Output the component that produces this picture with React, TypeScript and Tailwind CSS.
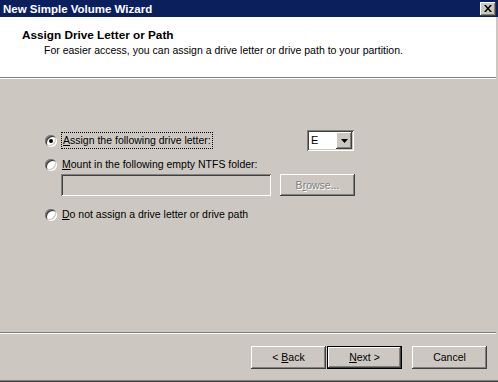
import type {ReactNode} from 'react';

const raised =
    'shadow-[inset_-1px_-1px_0_#404040,inset_1px_1px_0_#ffffff,inset_-2px_-2px_0_#808080,inset_2px_2px_0_#ccc8c1]';
const sunken =
    'shadow-[inset_1px_1px_0_#808080,inset_-1px_-1px_0_#ffffff,inset_2px_2px_0_#404040,inset_-2px_-2px_0_#ccc8c1]';

const Radio = ({checked}: {checked?: boolean}) => (
    <span className={`relative flex h-[12px] w-[12px] shrink-0 items-center justify-center rounded-full bg-white ${sunken}`}>
        {checked && <span className="h-[4px] w-[4px] rounded-full bg-black" />}
    </span>
);

const Button = ({children, isDefault}: {children: ReactNode; isDefault?: boolean}) => (
    <div
        className={`flex h-[23px] w-[75px] items-center justify-center bg-[#ccc8c1] ${
            isDefault ? 'border border-black' : ''
        }`}
    >
        <div className={`flex h-full w-full items-center justify-center ${raised}`}>
            <span className="whitespace-pre">{children}</span>
        </div>
    </div>
);

const Mn = ({children}: {children: ReactNode}) => <span className="underline underline-offset-[1px]">{children}</span>;

export default function App() {
    return (
        <div className="flex h-[382px] w-[498px] flex-col bg-[#ccc8c1] font-['Liberation_Sans',Arial,sans-serif] text-[10.5px] leading-[13px] text-black">
            {/* title bar */}
            <div className="flex h-[17px] shrink-0 items-center justify-between bg-[#0b1f5c] pl-[3px] pr-[2px]">
                <span className="text-[11.5px] font-bold leading-[14px] text-white">New Simple Volume Wizard</span>
                <div className={`flex h-[14px] w-[16px] items-center justify-center bg-[#ccc8c1] ${raised}`}>
                    <svg width="8" height="7" viewBox="0 0 8 7" className="mb-[1px]">
                        <path d="M0 0h2l2 2.5L6 0h2L5 3.5 8 7H6L4 4.5 2 7H0l3-3.5z" fill="#000" />
                    </svg>
                </div>
            </div>

            <div className="flex min-h-0 flex-1">
                <div className="flex flex-1 flex-col">
                    {/* header */}
                    <div className="h-[60px] shrink-0 bg-white pt-[11px]">
                        <div className="pl-[22px] text-[11.75px] font-bold leading-[14px]">Assign Drive Letter or Path</div>
                        <div className="mt-[2px] pl-[44px]">
                            For easier access, you can assign a drive letter or drive path to your partition.
                        </div>
                    </div>
                    <div className="h-px shrink-0 bg-[#808080]" />
                    <div className="h-px shrink-0 bg-white" />

                    {/* body */}
                    <div className="flex flex-1 flex-col pl-[45px] pt-[51px]">
                        <div className="flex h-[21px] w-[309px] items-center">
                            <Radio checked />
                            <span className="ml-[4px] border border-dotted border-black px-[1px] leading-[15px]">
                                <Mn>A</Mn>ssign the following drive letter:
                            </span>
                            <div className={`ml-auto flex h-[21px] w-[47px] bg-white p-[2px] ${sunken}`}>
                                <span className="flex-1 pl-[2px] text-[11px] leading-[17px]">E</span>
                                <div className={`flex h-[17px] w-[16px] items-center justify-center bg-[#ccc8c1] ${raised}`}>
                                    <svg width="7" height="4" viewBox="0 0 7 4">
                                        <path d="M0 0h7L3.5 4z" fill="#000" />
                                    </svg>
                                </div>
                            </div>
                        </div>

                        <div className="mt-[5px] flex h-[17px] items-center">
                            <Radio />
                            <span className="ml-[5px]">
                                <Mn>M</Mn>ount in the following empty NTFS folder:
                            </span>
                        </div>

                        <div className="mt-[1px] ml-[16px] flex items-center gap-[9px]">
                            <div className={`h-[22px] w-[210px] bg-[#ccc8c1] ${sunken}`} />
                            <div className={`flex h-[22px] w-[75px] items-center justify-center bg-[#ccc8c1] text-[#808080] [text-shadow:1px_1px_0_#ffffff] ${raised}`}>
                                <span>
                                    B<Mn>r</Mn>owse...
                                </span>
                            </div>
                        </div>

                        <div className="mt-[10px] flex h-[17px] items-center">
                            <Radio />
                            <span className="ml-[5px]">
                                <Mn>D</Mn>o not assign a drive letter or drive path
                            </span>
                        </div>
                    </div>

                    {/* footer */}
                    <div className="h-px shrink-0 bg-[#808080]" />
                    <div className="h-px shrink-0 bg-white" />
                    <div className="flex h-[46px] shrink-0 items-start justify-end pr-[9px] pt-[12px]">
                        <Button>
                            {'< '}
                            <Mn>B</Mn>ack
                        </Button>
                        <div className="ml-[1px]">
                            <Button isDefault>
                                <Mn>N</Mn>
                                {'ext >'}
                            </Button>
                        </div>
                        <div className="ml-[10px]">
                            <Button>Cancel</Button>
                        </div>
                    </div>
                </div>
                <div className="w-[2px] shrink-0 bg-[#ccc8c1]" />
            </div>

            <div className="h-px shrink-0 bg-[#808080]" />
            <div className="h-px shrink-0 bg-[#404040]" />
        </div>
    );
}
